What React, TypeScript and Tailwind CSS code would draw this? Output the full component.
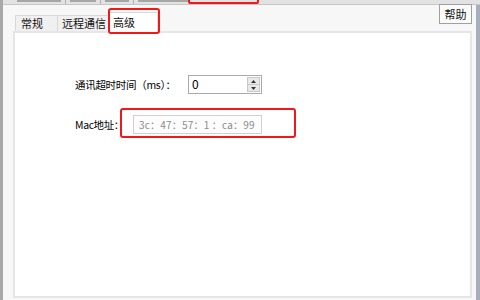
const font = { fontFamily: '"SimSun", "Noto Sans CJK SC", sans-serif' };

const Spin = () => (
  <div className="flex w-[74px] h-[19px] border border-[#aaaaaa] bg-white">
    <div className="flex-1 pl-[3px] text-[12px] leading-[16px] text-black">0</div>
    <div className="flex flex-col w-[13px] my-[1px] mr-[1px]">
      <div className="flex-1 flex items-center justify-center bg-[#e8e8e8] border border-[#c8c8c8]">
        <svg width="5" height="3" viewBox="0 0 5 3"><path d="M2.5 0 L5 3 L0 3 Z" fill="#333" /></svg>
      </div>
      <div className="flex-1 flex items-center justify-center bg-[#e8e8e8] border border-[#c8c8c8] border-t-0">
        <svg width="5" height="3" viewBox="0 0 5 3"><path d="M0 0 L5 0 L2.5 3 Z" fill="#333" /></svg>
      </div>
    </div>
  </div>
);

export default function App() {
  return (
    <div className="w-[480px] h-[300px] flex bg-[#f0f0f0] overflow-hidden text-[11px] text-[#111111] whitespace-nowrap" style={font}>
      {/* left edge of the parent window */}
      <div className="w-[3px] bg-[#a8a8a8]" />
      <div className="flex-1 flex flex-col relative">
        {/* cut-off tab row at top */}
        <div className="h-[5px] bg-[#e2e2e2] border-b border-[#c6c6c6] flex items-start gap-[4px] pl-[14px] relative">
          <div className="w-[44px] h-[2px] bg-[#6a6a6a] opacity-50" />
          <div className="w-[1px] h-[4px] bg-[#b0b0b0]" />
          <div className="w-[26px] h-[2px] bg-[#6a6a6a] opacity-50" />
          <div className="w-[1px] h-[4px] bg-[#b0b0b0]" />
          <div className="w-[24px] h-[2px] bg-[#6a6a6a] opacity-50" />
          <div className="w-[1px] h-[4px] bg-[#b0b0b0]" />
          <div className="w-[52px] h-[2px] bg-[#6a6a6a] opacity-50" />
          <div className="absolute left-[185px] top-[-4px] w-[71px] h-[8px] border-2 border-[#f01818] rounded-[2px]" />
        </div>
        <div className="flex-1 flex bg-[#f7f7f7]">
          <div className="flex-1 flex flex-col pl-[10px] pr-[4px] pt-[5px]">
            <div className="flex h-[21px] items-end relative">
              {/* tabs */}
              <div className="flex items-end h-full">
                <div className="h-[16px] w-[43px] ml-[2px] bg-[#f0f0f0] border border-b-0 border-[#d9d9d9] pl-[5px] leading-[15px]">常规</div>
                <div className="h-[16px] w-[52px] bg-[#f0f0f0] border border-b-0 border-l-0 border-[#d9d9d9] pl-[4px] leading-[15px]">远程通信</div>
                <div className="h-[20px] w-[48px] bg-white border border-b-0 border-l-0 border-[#d9d9d9] pl-[3px] leading-[18px] relative z-10 mb-[-1px]">高级</div>
              </div>
              <div className="absolute left-[95px] top-[-2px] w-[52px] h-[26px] border-2 border-[#f01818] rounded-[3px] z-20" />
              {/* help button */}
              <div className="absolute right-[0px] top-[-6px] w-[33px] h-[20px] bg-[#fafafa] border border-[#a0a0a0] flex items-center justify-center leading-[16px]">帮助</div>
            </div>
            <div className="flex-1 bg-white border-2 border-[#e6e6e6] mb-[2px] pt-[42px] pl-[60px]">
              <div className="flex items-center h-[19px]">
                <span className="w-[113px] text-[10.5px] leading-[16px] tracking-[-0.3px] text-black">通讯超时时间（ms）：</span>
                <Spin />
              </div>
              <div className="flex items-center mt-[21px] h-[19px] relative">
                <span className="w-[58px] text-[10.5px] leading-[16px] tracking-[-0.4px] text-black">Mac地址：</span>
                <div className="w-[129px] h-[19px] border border-[#d0d0d0] bg-[#fdfdfd] pl-[5px] leading-[17px] text-[10px] text-[#8a8a8a] tracking-[0.2px]">
                  3c：47：57：1 ：ca：99
                </div>
                <div className="absolute left-[45px] top-[-7px] w-[176px] h-[30px] border-2 border-[#f01818] rounded-[3px]" />
              </div>
            </div>
          </div>
          <div className="w-[4px] bg-[#a7aebb]" />
        </div>
      </div>
    </div>
  );
}
